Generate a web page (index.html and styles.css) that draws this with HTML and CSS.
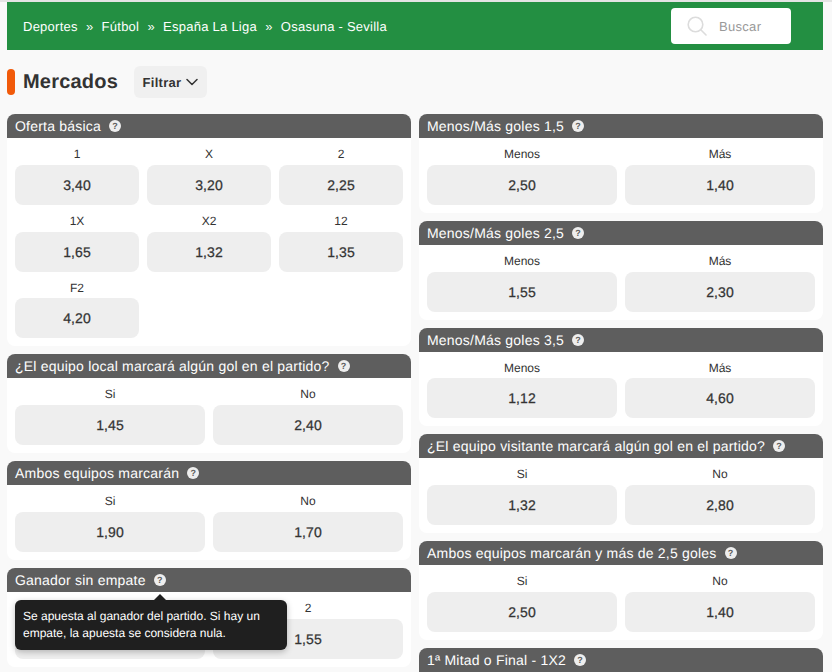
FILE: index.html
```html
<!DOCTYPE html>
<html lang="es">
<head>
<meta charset="utf-8">
<title>Mercados</title>
<link rel="stylesheet" href="styles.css">
</head>
<body>
<div class="page">
  <header class="topbar">
    <nav class="crumbs">
      <span>Deportes</span><span class="sep">»</span><span>Fútbol</span><span class="sep">»</span><span>España La Liga</span><span class="sep">»</span><span>Osasuna - Sevilla</span>
    </nav>
    <div class="search">
      <svg class="search-icon" width="20" height="20" viewBox="0 0 20 20" fill="none" stroke="#dcdcdc" stroke-width="1.6"><circle cx="8.5" cy="8.5" r="7.3"/><path d="M13.8 13.8 19 19" stroke-linecap="round"/></svg>
      <span class="search-text">Buscar</span>
    </div>
  </header>
  <div class="title-row">
    <span class="accent"></span>
    <h1 class="title">Mercados</h1>
    <button class="filter">Filtrar
      <svg width="12" height="8" viewBox="0 0 12 8" fill="none" stroke="#333" stroke-width="1.5" stroke-linecap="round" stroke-linejoin="round"><path d="M1 1.5 6 6.5 11 1.5"/></svg>
    </button>
  </div>
  <div class="columns">
    <div class="col">
      <section class="card">
        <h2 class="card-head">Oferta básica <span class="help">?</span></h2>
        <div class="grid three">
          <div class="cell"><div class="lbl">1</div><div class="odd">3,40</div></div>
          <div class="cell"><div class="lbl">X</div><div class="odd">3,20</div></div>
          <div class="cell"><div class="lbl">2</div><div class="odd">2,25</div></div>
          <div class="cell"><div class="lbl">1X</div><div class="odd">1,65</div></div>
          <div class="cell"><div class="lbl">X2</div><div class="odd">1,32</div></div>
          <div class="cell"><div class="lbl">12</div><div class="odd">1,35</div></div>
          <div class="cell"><div class="lbl">F2</div><div class="odd">4,20</div></div>
        </div>
      </section>
      <section class="card">
        <h2 class="card-head">¿El equipo local marcará algún gol en el partido? <span class="help">?</span></h2>
        <div class="grid two">
          <div class="cell"><div class="lbl">Si</div><div class="odd">1,45</div></div>
          <div class="cell"><div class="lbl">No</div><div class="odd">2,40</div></div>
        </div>
      </section>
      <section class="card">
        <h2 class="card-head">Ambos equipos marcarán <span class="help">?</span></h2>
        <div class="grid two">
          <div class="cell"><div class="lbl">Si</div><div class="odd">1,90</div></div>
          <div class="cell"><div class="lbl">No</div><div class="odd">1,70</div></div>
        </div>
      </section>
      <section class="card has-tip">
        <h2 class="card-head">Ganador sin empate <span class="help">?</span></h2>
        <div class="grid two">
          <div class="cell"><div class="lbl">1</div><div class="odd">2,30</div></div>
          <div class="cell"><div class="lbl">2</div><div class="odd">1,55</div></div>
        </div>
        <div class="tooltip">Se apuesta al ganador del partido. Si hay un empate, la apuesta se considera nula.</div>
      </section>
    </div>
    <div class="col">
      <section class="card">
        <h2 class="card-head">Menos/Más goles 1,5 <span class="help">?</span></h2>
        <div class="grid two">
          <div class="cell"><div class="lbl">Menos</div><div class="odd">2,50</div></div>
          <div class="cell"><div class="lbl">Más</div><div class="odd">1,40</div></div>
        </div>
      </section>
      <section class="card">
        <h2 class="card-head">Menos/Más goles 2,5 <span class="help">?</span></h2>
        <div class="grid two">
          <div class="cell"><div class="lbl">Menos</div><div class="odd">1,55</div></div>
          <div class="cell"><div class="lbl">Más</div><div class="odd">2,30</div></div>
        </div>
      </section>
      <section class="card">
        <h2 class="card-head">Menos/Más goles 3,5 <span class="help">?</span></h2>
        <div class="grid two">
          <div class="cell"><div class="lbl">Menos</div><div class="odd">1,12</div></div>
          <div class="cell"><div class="lbl">Más</div><div class="odd">4,60</div></div>
        </div>
      </section>
      <section class="card">
        <h2 class="card-head">¿El equipo visitante marcará algún gol en el partido? <span class="help">?</span></h2>
        <div class="grid two">
          <div class="cell"><div class="lbl">Si</div><div class="odd">1,32</div></div>
          <div class="cell"><div class="lbl">No</div><div class="odd">2,80</div></div>
        </div>
      </section>
      <section class="card">
        <h2 class="card-head">Ambos equipos marcarán y más de 2,5 goles <span class="help">?</span></h2>
        <div class="grid two">
          <div class="cell"><div class="lbl">Si</div><div class="odd">2,50</div></div>
          <div class="cell"><div class="lbl">No</div><div class="odd">1,40</div></div>
        </div>
      </section>
      <section class="card">
        <h2 class="card-head">1ª Mitad o Final - 1X2 <span class="help">?</span></h2>
        <div class="grid three">
          <div class="cell"><div class="lbl">1</div><div class="odd">1,90</div></div>
          <div class="cell"><div class="lbl">X</div><div class="odd">3,20</div></div>
          <div class="cell"><div class="lbl">2</div><div class="odd">1,80</div></div>
        </div>
      </section>
    </div>
  </div>
</div>
</body>
</html>
```
FILE: styles.css
```css
* { box-sizing: border-box; }
html, body { margin: 0; height: 672px; overflow: hidden; }
body { background: #f9f9f9; font-family: "Liberation Sans", sans-serif; color: #333; text-rendering: geometricPrecision; }
.page { padding: 2px 9px 0 7px; position: relative; }
.page::before { content: ""; position: absolute; left: 0; right: 0; top: 0; height: 2px; background: #e4e4e4; }
.topbar { height: 48px; background: #238f42; display: flex; align-items: center; justify-content: space-between; padding: 0 32px 0 16px; }
.crumbs { display: flex; gap: 8.2px; font-size: 13px; color: #fff; letter-spacing: .25px; }
.search { width: 120px; height: 36px; background: #fff; border-radius: 4px; display: flex; align-items: center; padding-left: 16px; gap: 12px; }
.search-text { font-size: 13px; color: #999; letter-spacing: .3px; padding-top: 1px; }
.title-row { display: flex; align-items: center; height: 32px; margin: 16px 0; }
.accent { width: 8px; height: 26px; border-radius: 4px; background: #f15a0a; margin-right: 8px; }
.title { margin: 0; font-size: 20px; line-height: 34px; font-weight: 700; color: #333; letter-spacing: .2px; }
.filter { margin-left: 16px; height: 32px; width: 73px; border: 0; border-radius: 6px; background: #f0f0f0; font: 700 13px "Liberation Sans", sans-serif; letter-spacing: .3px; color: #333; display: flex; align-items: center; justify-content: center; gap: 5px; padding: 0; text-rendering: geometricPrecision; }
.columns { display: flex; gap: 8px; }
.col { flex: 1 1 0; min-width: 0; display: flex; flex-direction: column; gap: 8px; }
.card { background: #fff; border-radius: 8px; position: relative; }
.card-head { margin: 0; height: 24px; background: #5e5e5e; color: #fff; border-radius: 8px 8px 0 0; font: 400 14px/24px "Liberation Sans", sans-serif; padding: 0 8px; display: flex; align-items: center; gap: 8px; letter-spacing: .21px; }
.help { width: 12px; height: 12px; border-radius: 50%; background: #eee; color: #5e5e5e; font: 700 9px/12px "Liberation Sans", sans-serif; text-align: center; letter-spacing: 0; }
.grid { display: grid; gap: 0 8px; padding: 0 8px 8px; }
.three { grid-template-columns: repeat(3, 1fr); }
.two { grid-template-columns: repeat(2, 1fr); }
.lbl { height: 26.8px; font: 400 12px/32px "Liberation Sans", sans-serif; text-align: center; color: #333; }
.odd { height: 40px; border-radius: 8px; background: #eee; font: 400 14px/41px "Liberation Sans", sans-serif; letter-spacing: .1px; -webkit-text-stroke: .25px #333; text-align: center; color: #333; }
.tooltip { position: absolute; left: 8px; top: 32px; width: 272px; height: 50px; background: #1f1f1f; color: #fff; border-radius: 6px; padding: 8px 8px 0; font: 400 12px/17px "Liberation Sans", sans-serif; box-shadow: 0 2px 6px rgba(0,0,0,.25); }
.tooltip::before { content: ""; position: absolute; left: 139px; top: -6px; border: 6px solid transparent; border-top: 0; border-bottom-color: #1f1f1f; }
```
